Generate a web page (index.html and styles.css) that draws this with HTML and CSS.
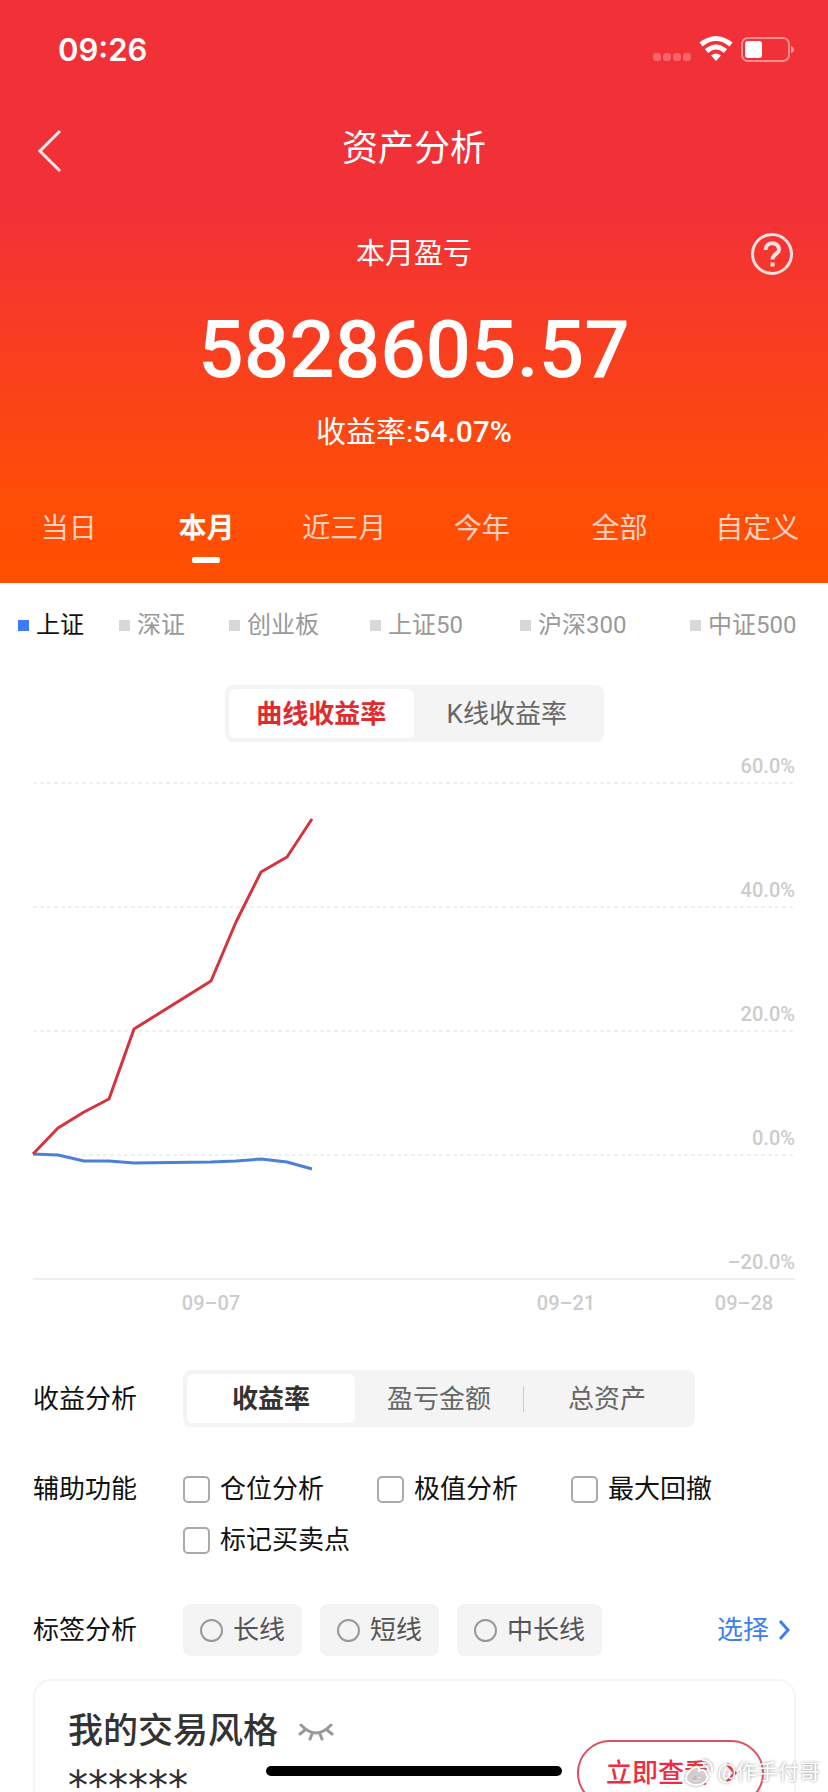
FILE: index.html
```html
<!DOCTYPE html>
<html lang="zh-CN">
   <head>
      <meta charset="UTF-8">
      <meta name="viewport" content="width=device-width, initial-scale=1.0">
      <title>资产分析</title>
      <link rel="stylesheet" href="styles.css">
   </head>

   <body>
      <div class="app">

         <!---------------HEADER-------------->
         <header class="header">
            <div class="status-bar">
               <span class="time">09:26</span>
               <svg class="status-icons" width="144" height="30" viewBox="0 0 144 30" aria-hidden="true">
                  <g fill="#fff" fill-opacity=".25">
                     <rect x="1" y="18" width="8" height="8" rx="3"/>
                     <rect x="11" y="18" width="8" height="8" rx="3"/>
                     <rect x="21" y="18" width="8" height="8" rx="3"/>
                     <rect x="31" y="18" width="8" height="8" rx="3"/>
                  </g>
                  <g fill="none" stroke="#fff" stroke-width="5">
                     <path d="M49 9.500Q64 -2.500 79 9.500"/>
                     <path d="M54.500 16Q64 8 73.500 16"/>
                  </g>
                  <path d="M59 20.500Q64 16.500 69 20.500L64 26Z" fill="#fff"/>
                  <rect x="90" y="3" width="47" height="23" rx="6" fill="none" stroke="#fff" stroke-opacity=".45" stroke-width="2"/>
                  <rect x="93" y="6" width="17" height="17" rx="3" fill="#fff"/>
                  <path d="M139 11Q142 12 142 14.500T139 18Z" fill="#fff" fill-opacity=".5"/>
               </svg>
            </div>

            <div class="nav-bar">
               <button type="button" class="icon-button" aria-label="返回">
                  <svg width="28" height="46" viewBox="0 0 28 46"><path d="M25 3L5 23L25 43" fill="none" stroke="#fff" stroke-opacity=".9" stroke-width="3"/></svg>
               </button>
               <h1>资产分析</h1>
            </div>

            <div class="summary">
               <div class="summary-title">
                  <h2>本月盈亏</h2>
                  <button type="button" class="icon-button" aria-label="帮助">
                     <svg width="44" height="44" viewBox="0 0 44 44" fill="none" stroke="#fff" stroke-opacity=".85" stroke-width="3">
                        <circle cx="22" cy="22" r="19.500"/>
                        <path d="M15.500 18C15.500 9 29 9 29 17.500C29 22 22.500 22 22.500 27.500" stroke-width="4"/>
                        <path d="M22.500 30.500V34.500" stroke-width="4"/>
                     </svg>
                  </button>
               </div>
               <p class="amount">5828605.57</p>
               <p class="rate">收益率:<strong>54.07%</strong></p>
            </div>

            <nav class="tabs">
               <button type="button">当日</button>
               <button type="button" class="active">本月</button>
               <button type="button">近三月</button>
               <button type="button">今年</button>
               <button type="button">全部</button>
               <button type="button">自定义</button>
            </nav>
         </header>

         <!---------------INDEX LEGEND-------------->
         <div class="legend">
            <button type="button" class="active">上证</button>
            <button type="button">深证</button>
            <button type="button">创业板</button>
            <button type="button">上证50</button>
            <button type="button">沪深300</button>
            <button type="button">中证500</button>
         </div>

         <div class="segment chart-switch">
            <button type="button" class="active">曲线收益率</button>
            <button type="button">K线收益率</button>
         </div>

         <!---------------CHART-------------->
         <svg class="chart" viewBox="0 0 762 576" role="img" aria-label="收益率曲线">
            <g class="grid-lines">
               <path d="M0 35H762"/>
               <path d="M0 159H762"/>
               <path d="M0 283H762"/>
               <path d="M0 407H762"/>
            </g>
            <path class="axis" d="M0 531H762"/>
            <g class="y-labels">
               <text x="762" y="25">60.0%</text>
               <text x="762" y="149">40.0%</text>
               <text x="762" y="273">20.0%</text>
               <text x="762" y="397">0.0%</text>
               <text x="762" y="521">–20.0%</text>
            </g>
            <g class="x-labels">
               <text x="178" y="562">09–07</text>
               <text x="533" y="562">09–21</text>
               <text x="711" y="562">09–28</text>
            </g>
            <polyline class="line index-line" points="0,406 25,407 51,413 76,413 101,415 178,414 203,413 228,411 254,414 279,421"/>
            <polyline class="line profit-line" points="0,406 25,380 51,364 76,351 101,281 178,233 203,174 228,124 254,109 279,71"/>
         </svg>

         <!---------------OPTIONS-------------->
         <main class="options">
            <div class="option-row">
               <h3>收益分析</h3>
               <div class="segment analysis-switch">
                  <button type="button" class="active">收益率</button>
                  <button type="button">盈亏金额</button>
                  <button type="button" class="divided">总资产</button>
               </div>
            </div>

            <div class="option-row helper-row">
               <h3>辅助功能</h3>
               <div class="checks">
                  <label><input type="checkbox">仓位分析</label>
                  <label><input type="checkbox">极值分析</label>
                  <label><input type="checkbox">最大回撤</label>
                  <label><input type="checkbox">标记买卖点</label>
               </div>
            </div>

            <div class="option-row">
               <h3>标签分析</h3>
               <div class="tags">
                  <label><input type="radio" name="tag">长线</label>
                  <label><input type="radio" name="tag">短线</label>
                  <label><input type="radio" name="tag">中长线</label>
               </div>
               <a href="#" class="choose">选择
                  <svg width="12" height="22" viewBox="0 0 12 22"><path d="M2 2L10 11L2 20" fill="none" stroke="currentColor" stroke-width="3"/></svg>
               </a>
            </div>

            <section class="card">
               <div>
                  <div class="card-title">
                     <h2>我的交易风格</h2>
                     <button type="button" class="icon-button" aria-label="显示">
                        <svg width="36" height="20" viewBox="0 0 36 20" fill="none" stroke="#999" stroke-width="3" stroke-linecap="round">
                           <path d="M3 3Q18 19 33 3M7 8L2 12M29 8L34 12M14 12L12 17M22 12L24 17"/>
                        </svg>
                     </button>
                  </div>
                  <p class="hidden-value">******</p>
               </div>
               <a href="#" class="view-button">立即查看
                  <svg width="12" height="22" viewBox="0 0 12 22"><path d="M2 2L10 11L2 20" fill="none" stroke="currentColor" stroke-width="3"/></svg>
               </a>
            </section>
         </main>

         <div class="home-bar"></div>
         <div class="watermark">
            <svg width="30" height="30" viewBox="0 0 30 30" fill="none" stroke="#fff" stroke-width="2">
               <path d="M22 17C27 20 21 28 12 28C5 28 1 24 2 20C3 15 10 9 14 10C16 11 15 13 15 14C18 12 22 13 22 17Z" fill="#fff" fill-opacity=".6"/>
               <ellipse cx="12" cy="21" rx="7" ry="5" stroke="#ccc"/>
               <circle cx="11" cy="21" r="2" fill="#bbb" stroke="none"/>
               <path d="M19 8Q24 8 24 14M18 3Q29 3 28 15"/>
            </svg>
            @作手付哥
         </div>
      </div>
   </body>
</html>
```

FILE: styles.css
```css
*{
   box-sizing: border-box;
   margin: 0;
   padding: 0;
}

body{
   font-family: Roboto, "Noto Sans CJK SC", sans-serif;
   font-size: 26px;
   line-height: 36px;
   color: #111;
   background: #fff;
}

button{
   border: none;
   background: none;
   font: inherit;
   color: inherit;
}

a{
   color: inherit;
   text-decoration: none;
}

h1, h2, h3{
   font-weight: 400;
}

svg{
   display: block;
}

.app{
   height: 100vh;
   overflow: hidden;
}

/* header */
.header{
   color: #fff;
   background: linear-gradient(#f23038 0, #f23038 35%, #ff4d07 85%, #ff5000 100%);
}

.status-bar{
   display: flex;
   justify-content: space-between;
   align-items: center;
   height: 100px;
   padding: 0 32px 0 58px;
}

.time{
   font-family: Inter, sans-serif;
   font-size: 31px;
   font-weight: 600;
}

.nav-bar{
   display: grid;
   grid-template-columns: 60px 1fr 60px;
   align-items: center;
   height: 102px;
   padding: 0 35px;
}

.nav-bar h1{
   padding-bottom: 4px;
   font-size: 36px;
   line-height: 48px;
   text-align: center;
}

.summary{
   text-align: center;
}

.summary-title{
   display: grid;
   grid-template-columns: 44px 1fr 44px;
   align-items: center;
   height: 104px;
   padding: 0 34px;
}

.summary-title h2{
   grid-column: 2;
   font-size: 29px;
}

.amount{
   font-size: 80px;
   font-weight: 500;
   line-height: 88px;
}

.rate{
   padding-top: 14px;
   font-size: 30px;
   line-height: 48px;
}

.rate strong{
   font-weight: 500;
}

.tabs{
   display: grid;
   grid-template-columns: repeat(6, 1fr);
   padding: 55px 2px 0 0;
}

.tabs button{
   display: flex;
   flex-direction: column;
   align-items: center;
   height: 72px;
   font-size: 28px;
   color: rgba(255, 255, 255, .75);
}

.tabs .active{
   font-weight: 700;
   color: #fff;
}

.tabs .active::after{
   content: "";
   width: 28px;
   height: 6px;
   margin-top: 10px;
   border-radius: 2px;
   background: #fff;
}

/* legend */
.legend{
   display: grid;
   grid-template-columns: 101fr 110fr 141fr 150fr 170fr 138fr;
   padding: 24px 0 0 18px;
}

.legend button{
   display: flex;
   align-items: center;
   gap: 7px;
   font-size: 24px;
   color: #999;
   white-space: nowrap;
}

.legend button::before{
   content: "";
   width: 11px;
   height: 11px;
   background: #d8d8d8;
}

.legend .active{
   color: #111;
}

.legend .active::before{
   background: #3b7cf5;
}

/* segmented switches */
.segment{
   display: grid;
   grid-auto-flow: column;
   grid-auto-columns: 1fr;
   height: 57px;
   padding: 4px;
   border-radius: 8px;
   background: #f4f4f4;
   color: #666;
}

.segment button{
   position: relative;
   border-radius: 6px;
}

.segment .active{
   font-weight: 700;
   background: #fff;
}

.chart-switch{
   width: 379px;
   margin: 42px auto 0;
}

.chart-switch .active{
   color: #e02a2e;
}

.analysis-switch{
   width: 512px;
}

.analysis-switch .active{
   color: #333;
}

.divided::before{
   content: "";
   position: absolute;
   top: 12px;
   left: 0;
   width: 1px;
   height: 26px;
   background: #ccc;
}

/* chart */
.chart{
   width: calc(100% - 66px);
   margin: 6px 33px 0;
   overflow: visible;
}

.grid-lines{
   stroke: #f0f0f0;
   stroke-width: 2;
   stroke-dasharray: 4 3;
}

.axis{
   stroke: #eee;
   stroke-width: 2;
}

.y-labels, .x-labels{
   font-size: 20px;
   font-weight: 500;
   fill: #ccc;
   text-anchor: end;
}

.x-labels{
   text-anchor: middle;
}

.line{
   fill: none;
   stroke-width: 3;
   stroke-linejoin: round;
}

.profit-line{
   stroke: #d4343e;
}

.index-line{
   stroke: #4c80d8;
}

/* options */
.options{
   padding: 46px 32px 0 33px;
}

.option-row{
   display: flex;
   align-items: center;
}

.option-row h3{
   width: 150px;
   font-size: 26px;
}

.helper-row{
   align-items: flex-start;
   margin: 44px 0 46px;
}

.checks{
   display: grid;
   grid-template-columns: repeat(3, 194px);
   row-gap: 15px;
}

.checks label, .tags label{
   display: flex;
   align-items: center;
   gap: 10px;
   white-space: nowrap;
}

.checks input, .tags input{
   appearance: none;
   width: 27px;
   height: 27px;
   border: 2px solid #aaa;
   border-radius: 5px;
   background: #fff;
}

.tags{
   display: flex;
   gap: 18px;
}

.tags label{
   height: 52px;
   padding: 0 17px;
   border-radius: 8px;
   background: #f4f4f4;
   color: #555;
}

.tags input{
   width: 23px;
   height: 23px;
   border-color: #999;
   border-radius: 50%;
   background: none;
}

.choose{
   display: flex;
   align-items: center;
   gap: 9px;
   margin-left: auto;
   padding-right: 6px;
   color: #3f7ef0;
}

.card{
   display: flex;
   justify-content: space-between;
   align-items: flex-start;
   margin-top: 23px;
   padding: 27px 30px 36px 33px;
   border: 2px solid #f5f5f5;
   border-radius: 18px;
   color: #333;
}

.card-title{
   display: flex;
   align-items: center;
   gap: 20px;
}

.card-title h2{
   font-size: 35px;
   font-weight: 500;
   line-height: 48px;
}

.hidden-value{
   padding-top: 6px;
   font-family: "DejaVu Sans", sans-serif;
   font-size: 40px;
   line-height: 48px;
}

.view-button{
   display: flex;
   align-items: center;
   gap: 15px;
   height: 66px;
   margin-top: 32px;
   padding: 0 25px 0 27px;
   border: 2px solid #dc5060;
   border-radius: 33px;
   font-weight: 500;
   color: #ee2d40;
}

/* overlays */
.home-bar{
   position: fixed;
   bottom: 16px;
   left: 50%;
   width: 296px;
   height: 10px;
   margin-left: -148px;
   border-radius: 5px;
   background: #000;
}

.watermark{
   position: fixed;
   right: 8px;
   bottom: 2px;
   display: flex;
   align-items: center;
   gap: 3px;
   font-size: 21px;
   color: #fff;
   text-shadow: 0 0 3px #888;
}

.watermark svg{
   filter: drop-shadow(0 0 1px #888);
}
```
